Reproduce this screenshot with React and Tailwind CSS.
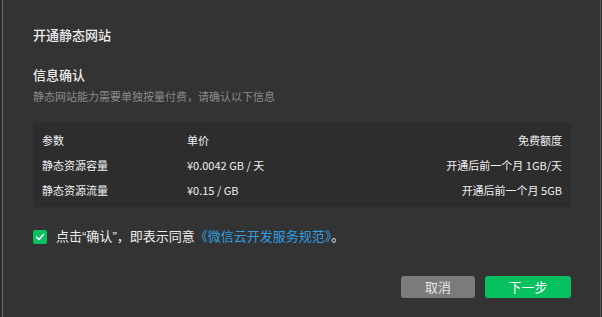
export default function App() {
  const rows = [
    ["静态资源容量", "¥0.0042 GB / 天", "开通后前一个月 1GB/天"],
    ["静态资源流量", "¥0.15 / GB", "开通后前一个月 5GB"],
  ];
  return (
    <div
      className="w-[602px] h-[317px] bg-[#333333] flex overflow-hidden"
      style={{ fontFamily: '"Noto Sans CJK SC", "Noto Sans", sans-serif' }}
    >
      {/* left edge line */}
      <div className="w-[2px] bg-[#2b2b2b]" />
      <div className="w-[1px] bg-[#6a6a6a]" />
      <div className="flex-1 pl-[30px] pr-[29px] flex flex-col">
        <div className="mt-[25px] text-[13px] leading-[20px] text-[#ededed] font-medium">开通静态网站</div>

        <div className="mt-[20px] text-[13px] leading-[20px] text-[#ededed] font-medium">信息确认</div>
        <div className="mt-[3px] text-[11px] leading-[16px] text-[#8a8a8a]">
          静态网站能力需要单独按量付费，请确认以下信息
        </div>

        <div className="mt-[19px] bg-[#2d2d2d] px-[9px] pt-[5px] pb-[4px] text-[11px] text-[#f0f0f0]">
          <div className="flex h-[25px] items-center">
            <div className="w-[145px]">参数</div>
            <div className="flex-1">单价</div>
            <div className="text-right">免费额度</div>
          </div>
          {rows.map((r) => (
            <div key={r[0]} className="flex h-[25px] items-center">
              <div className="w-[145px]">{r[0]}</div>
              <div className="flex-1">{r[1]}</div>
              <div className="text-right">{r[2]}</div>
            </div>
          ))}
        </div>

        <div className="mt-[19px] flex items-center gap-[9px] text-[13px] leading-[20px] text-[#ededed]">
          <div className="w-[14px] h-[14px] rounded-[2px] bg-[#07c160] flex items-center justify-center">
            <svg width="10" height="10" viewBox="0 0 10 10" fill="none">
              <path d="M1.5 5.2 L4 7.5 L8.5 2.5" stroke="#fff" strokeWidth="1.6" strokeLinecap="round" strokeLinejoin="round" />
            </svg>
          </div>
          <span>
            点击<span className="font-['Liberation_Sans']">“</span>确认<span className="font-['Liberation_Sans']">”</span>，即表示同意
            <span className="text-[#2f9fe0]">《微信云开发服务规范》</span>。
          </span>
        </div>

        <div className="mt-[29px] flex justify-end gap-[10px] text-[13px]">
          <button className="w-[74px] h-[22px] rounded-[3px] bg-[#7b7b7b] text-[#e6e6e6] leading-[22px]">取消</button>
          <button className="w-[86px] h-[22px] rounded-[3px] bg-[#07c160] text-white leading-[22px]">下一步</button>
        </div>
      </div>
      <div className="w-[1px] bg-[#5a5a5a]" />
      <div className="w-[1px] bg-[#2b2b2b]" />
    </div>
  );
}
